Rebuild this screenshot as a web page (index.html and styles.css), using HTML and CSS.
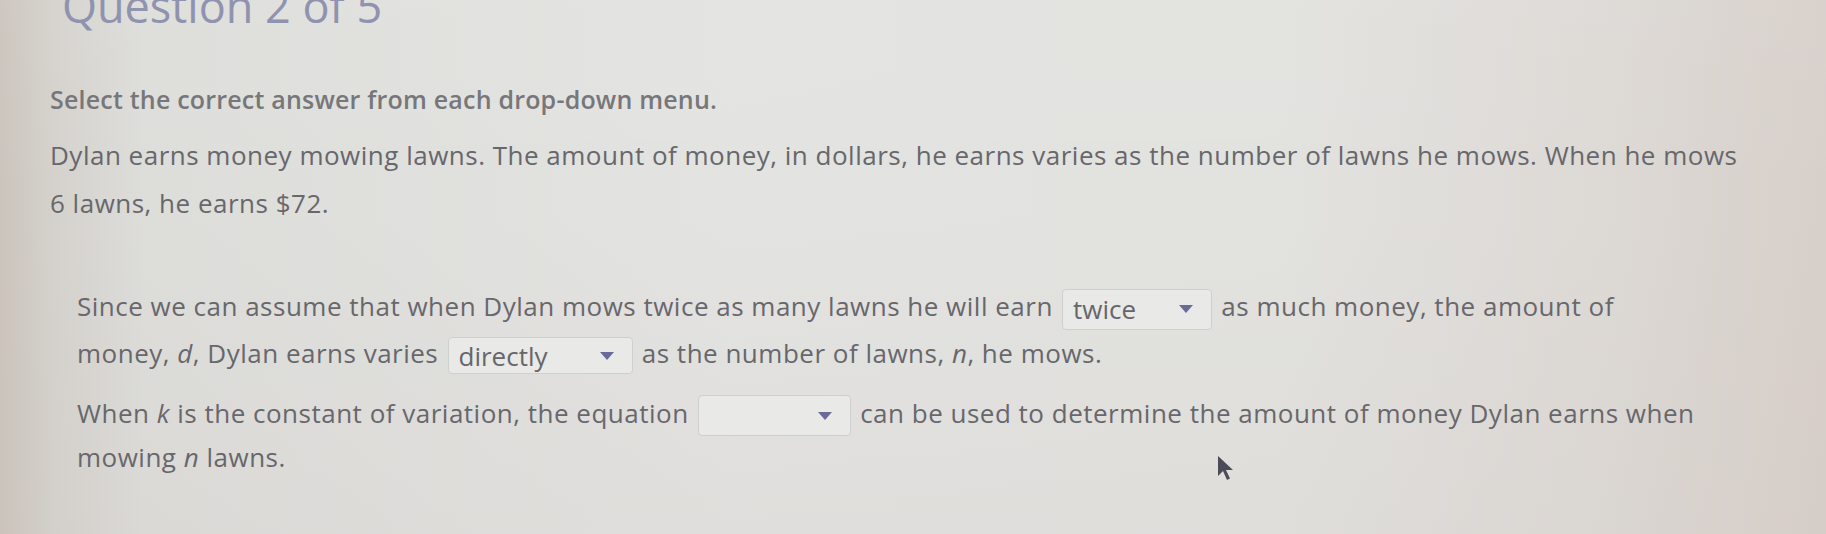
FILE: index.html
```html
<!DOCTYPE html>
<html lang="en">
<head>
    <meta charset="UTF-8">
    <meta name="viewport" content="width=device-width, initial-scale=1.0">
    <title>Question 2 of 5</title>
    <link rel="stylesheet" href="styles.css">
</head>
<body>
    <div class="page">
        <h1 class="q-title">Question 2 of 5</h1>

        <p class="instructions">Select the correct answer from each drop-down menu.</p>

        <p class="stem">Dylan earns money mowing lawns. The amount of money, in dollars, he earns varies as the number of lawns he mows. When he mows<br>6 lawns, he earns $72.</p>

        <div class="answers">
            <p>Since we can assume that when Dylan mows twice as many lawns he will earn
                <span class="select sel-twice"><span class="value">twice</span><span class="arrow"></span></span>
                as much money, the amount of<br>money, <i>d</i>, Dylan earns varies
                <span class="select sel-direct"><span class="value">directly</span><span class="arrow"></span></span>
                as the number of lawns, <i>n</i>, he mows.</p>
            <p>When <i>k</i> is the constant of variation, the equation
                <span class="select sel-eq"><span class="value"></span><span class="arrow"></span></span>
                can be used to determine the amount of money Dylan earns when<br>mowing <i>n</i> lawns.</p>
        </div>
    </div>

    <!-- mouse pointer -->
    <svg class="pointer" width="20" height="26" viewBox="0 0 20 26">
        <path d="M2 1 L2 21 L7 16 L11 25 L14 23.5 L10 15 L17 15 Z" fill="#4c4c58"/>
    </svg>
</body>
</html>
```

FILE: styles.css
```css
body {
    position: relative;
    margin: 0;
    height: 534px;
    overflow: hidden;
    font-family: 'Open Sans', 'Liberation Sans', sans-serif;
    color: #67676c;
    background:
        linear-gradient(180deg, rgba(255,255,255,0.05) 0%, rgba(255,255,255,0) 40%, rgba(200,190,185,0.12) 100%),
        linear-gradient(90deg, #cbc4bc 0%, #d5d2cd 3%, #dddddA 8%, #e3e3e1 40%, #e2e2df 70%, #ddd9d5 88%, #d7cfca 100%);
}
.page {
    padding: 0 0 0 50px;
}
.q-title {
    margin: -17px 0 0 12px;
    font-size: 45px;
    font-weight: 400;
    line-height: 46px;
    color: #8f93b0;
}
.instructions {
    margin: 48px 0 0;
    font-size: 25px;
    font-weight: 600;
    letter-spacing: 0.2px;
    line-height: 45px;
    color: #77777a;
}
.stem {
    margin: 9px 0 0;
    font-size: 26px;
    letter-spacing: 0.5px;
    line-height: 48px;
}
.answers {
    margin: 56px 0 0 27px;
}
.answers p {
    margin: 0 0 14px;
    font-size: 26px;
    letter-spacing: 0.5px;
    line-height: 46px;
}
.answers p + p {
    line-height: 43px;
    margin-top: 16px;
}
.select {
    display: inline-flex;
    align-items: center;
    justify-content: space-between;
    box-sizing: border-box;
    height: 41px;
    padding: 0 18px 0 10px;
    margin: 0 2px;
    vertical-align: middle;
    background: #e9e9e7;
    border: 1px solid #cfcfcd;
    border-radius: 4px;
    letter-spacing: 0;
}
.sel-twice { width: 150px; }
.sel-direct { width: 185px; height: 37px; }
.sel-eq { width: 153px; }
.select .value {
    color: #66666a;
}
.select .arrow {
    width: 0;
    height: 0;
    border-left: 7px solid transparent;
    border-right: 7px solid transparent;
    border-top: 8px solid #6a6a98;
}
.pointer {
    position: absolute;
    left: 1216px;
    top: 455px;
    filter: blur(0.6px);
}
```
